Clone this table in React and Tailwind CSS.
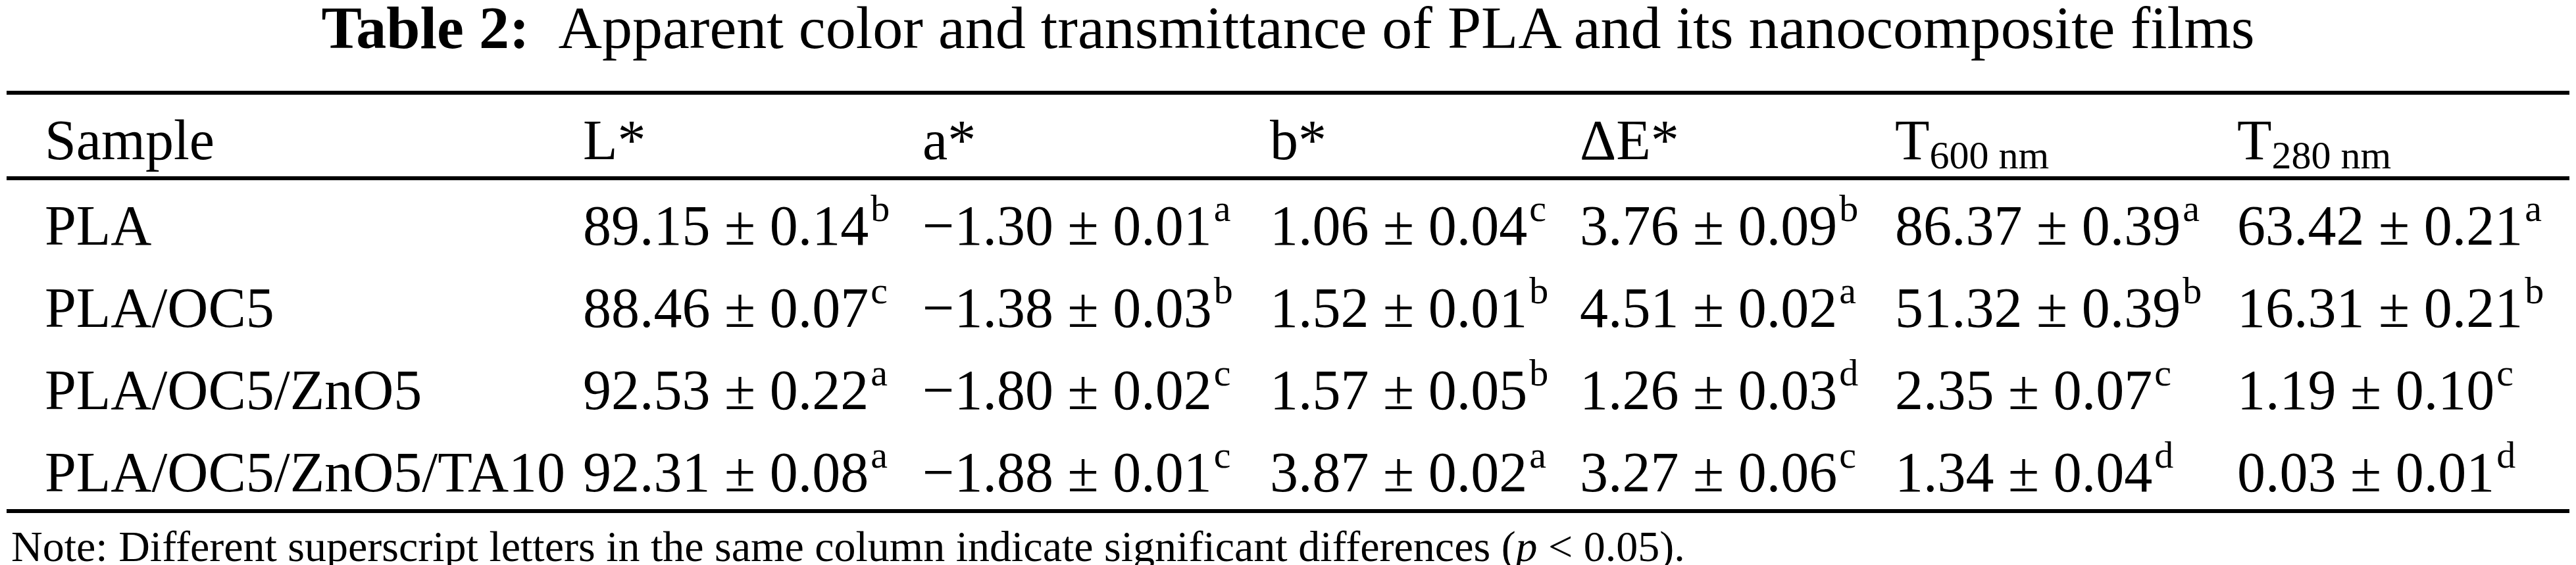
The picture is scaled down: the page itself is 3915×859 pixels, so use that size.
const cols = "grid grid-cols-[818px_516px_528px_471px_479px_520px_1fr] pl-[58px] whitespace-nowrap";

const rows = [
  ["PLA", ["89.15", "0.14", "b"], ["−1.30", "0.01", "a"], ["1.06", "0.04", "c"], ["3.76", "0.09", "b"], ["86.37", "0.39", "a"], ["63.42", "0.21", "a"]],
  ["PLA/OC5", ["88.46", "0.07", "c"], ["−1.38", "0.03", "b"], ["1.52", "0.01", "b"], ["4.51", "0.02", "a"], ["51.32", "0.39", "b"], ["16.31", "0.21", "b"]],
  ["PLA/OC5/ZnO5", ["92.53", "0.22", "a"], ["−1.80", "0.02", "c"], ["1.57", "0.05", "b"], ["1.26", "0.03", "d"], ["2.35", "0.07", "c"], ["1.19", "0.10", "c"]],
  ["PLA/OC5/ZnO5/TA10", ["92.31", "0.08", "a"], ["−1.88", "0.01", "c"], ["3.87", "0.02", "a"], ["3.27", "0.06", "c"], ["1.34", "0.04", "d"], ["0.03", "0.01", "d"]],
];

function Rule() {
  return <div className="h-[6px] bg-black" />;
}

function Value({ v }) {
  const [mean, sd, letter] = v;
  return (
    <div>
      {mean} ± {sd}
      <sup className="ml-[3px] text-[58px] top-[-36px]">{letter}</sup>
    </div>
  );
}

function T({ nm }) {
  return (
    <div>
      T<sub className="text-[60px] top-[14px]">{nm} nm</sub>
    </div>
  );
}

export default function App() {
  return (
    <div className="w-[3915px] h-[859px] overflow-hidden bg-white text-black font-['Liberation_Serif','Times_New_Roman',serif]">
      <div className="h-[138px] pt-[9px] text-center text-[92px] leading-[66px] whitespace-nowrap">
        <span className="font-bold">Table 2:</span>
        <span className="ml-[44px]">Apparent color and transmittance of PLA and its nanocomposite films</span>
      </div>

      <div className="mx-[10px]">
        <Rule />
        <div className={`${cols} h-[124px] pt-[22px] text-[86px] leading-[95px]`}>
          <div>Sample</div>
          <div>L*</div>
          <div>a*</div>
          <div>b*</div>
          <div>ΔE*</div>
          <T nm="600" />
          <T nm="280" />
        </div>
        <Rule />
        {rows.map((r) => (
          <div key={r[0]} className={`${cols} h-[125px] pt-[22px] text-[86px] leading-[95px]`}>
            <div>{r[0]}</div>
            {r.slice(1).map((v, i) => (
              <Value key={i} v={v} />
            ))}
          </div>
        ))}
        <Rule />
      </div>

      <div className="pl-[17px] pt-[14px] text-[66px] leading-[73px] whitespace-nowrap">
        Note: Different superscript letters in the same column indicate significant differences (<i>p</i> &lt; 0.05).
      </div>
    </div>
  );
}
